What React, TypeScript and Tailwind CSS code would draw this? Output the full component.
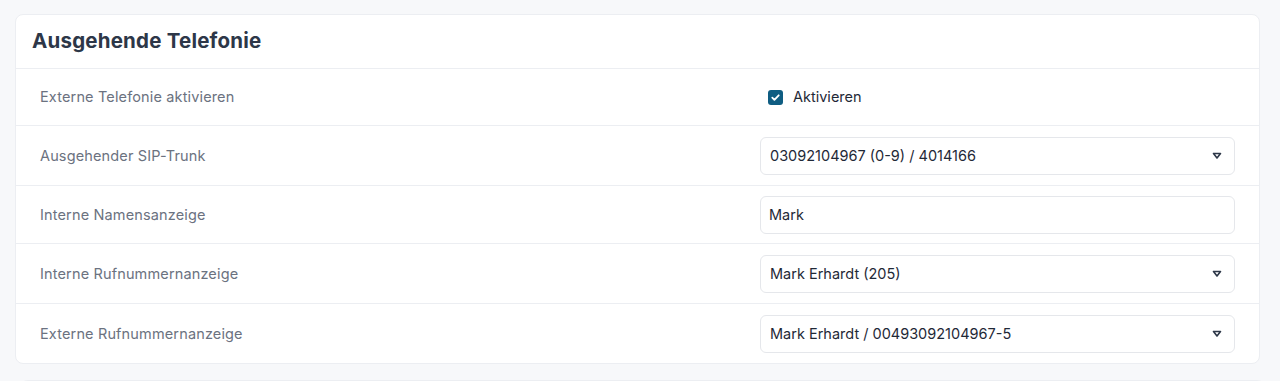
import { ReactNode } from 'react';

const font = { fontFamily: 'Inter, "Noto Sans", sans-serif' };

function Caret() {
  return (
    <svg width="10" height="8" viewBox="0 0 10 8" className="text-[#2d3748]">
      <path d="M1.5 1.5h7L5 6z" fill="none" stroke="currentColor" strokeWidth="1.6" strokeLinejoin="round" />
    </svg>
  );
}

function Row({ label, children, last }: { label: string; children: ReactNode; last?: boolean }) {
  return (
    <div className={`flex items-center ${last ? '' : 'border-b border-[#eceef2]'}`}>
      <div className="w-[744px] pl-[24px] text-[14.5px] tracking-[0.01em] text-[#6b7280]">{label}</div>
      <div className="w-[475px]">{children}</div>
    </div>
  );
}

function SelectBox({ value }: { value: string }) {
  return (
    <div className="flex h-[38px] items-center justify-between rounded-md border border-[#e5e7eb] bg-white pl-[9px] pr-[12px] text-[14.5px] text-[#1f2937]">
      <span>{value}</span>
      <Caret />
    </div>
  );
}

export default function App() {
  return (
    <div className="min-h-[381px] bg-[#f7f8fa] px-[15px] pt-[14px]" style={font}>
      <div className="w-[1245px] rounded-lg border border-[#eceef2] bg-white">
        {/* Header */}
        <div className="flex h-[54px] items-center border-b border-[#eceef2] px-[16px]">
          <h2 className="text-[20.5px] font-bold tracking-[0.01em] text-[#2d3748]">Ausgehende Telefonie</h2>
        </div>

        <div className="h-[57px]">
          <Row label="Externe Telefonie aktivieren">
            <div className="flex h-[56px] items-center gap-[10px] pl-[8px]">
              <span className="flex h-[15px] w-[15px] items-center justify-center rounded-[3px] bg-[#0f5d82]">
                <svg width="11" height="11" viewBox="0 0 12 12">
                  <path d="M2.5 6.2l2.3 2.3L9.5 3.6" fill="none" stroke="white" strokeWidth="2" strokeLinecap="round" strokeLinejoin="round" />
                </svg>
              </span>
              <span className="text-[14.5px] text-[#1f2937]">Aktivieren</span>
            </div>
          </Row>
        </div>

        <div className="[&>div]:h-[60px]">
          <Row label="Ausgehender SIP-Trunk">
            <SelectBox value="03092104967 (0-9) / 4014166" />
          </Row>
        </div>
        <div className="[&>div]:h-[58px]">
          <Row label="Interne Namensanzeige">
            <div className="flex h-[38px] items-center rounded-md border border-[#e5e7eb] bg-white pl-[8px] text-[14.5px] text-[#1f2937]">
              Mark
            </div>
          </Row>
        </div>
        <div className="[&>div]:h-[60px]">
          <Row label="Interne Rufnummernanzeige">
            <SelectBox value="Mark Erhardt (205)" />
          </Row>
        </div>
        <div className="[&>div]:h-[59px]">
          <Row label="Externe Rufnummernanzeige" last>
            <SelectBox value="Mark Erhardt / 00493092104967-5" />
          </Row>
        </div>
      </div>

      <div className="mt-[16px] ml-[5px] h-[10px] rounded-t-lg border-t border-[#eceef2] bg-white" />
    </div>
  );
}
